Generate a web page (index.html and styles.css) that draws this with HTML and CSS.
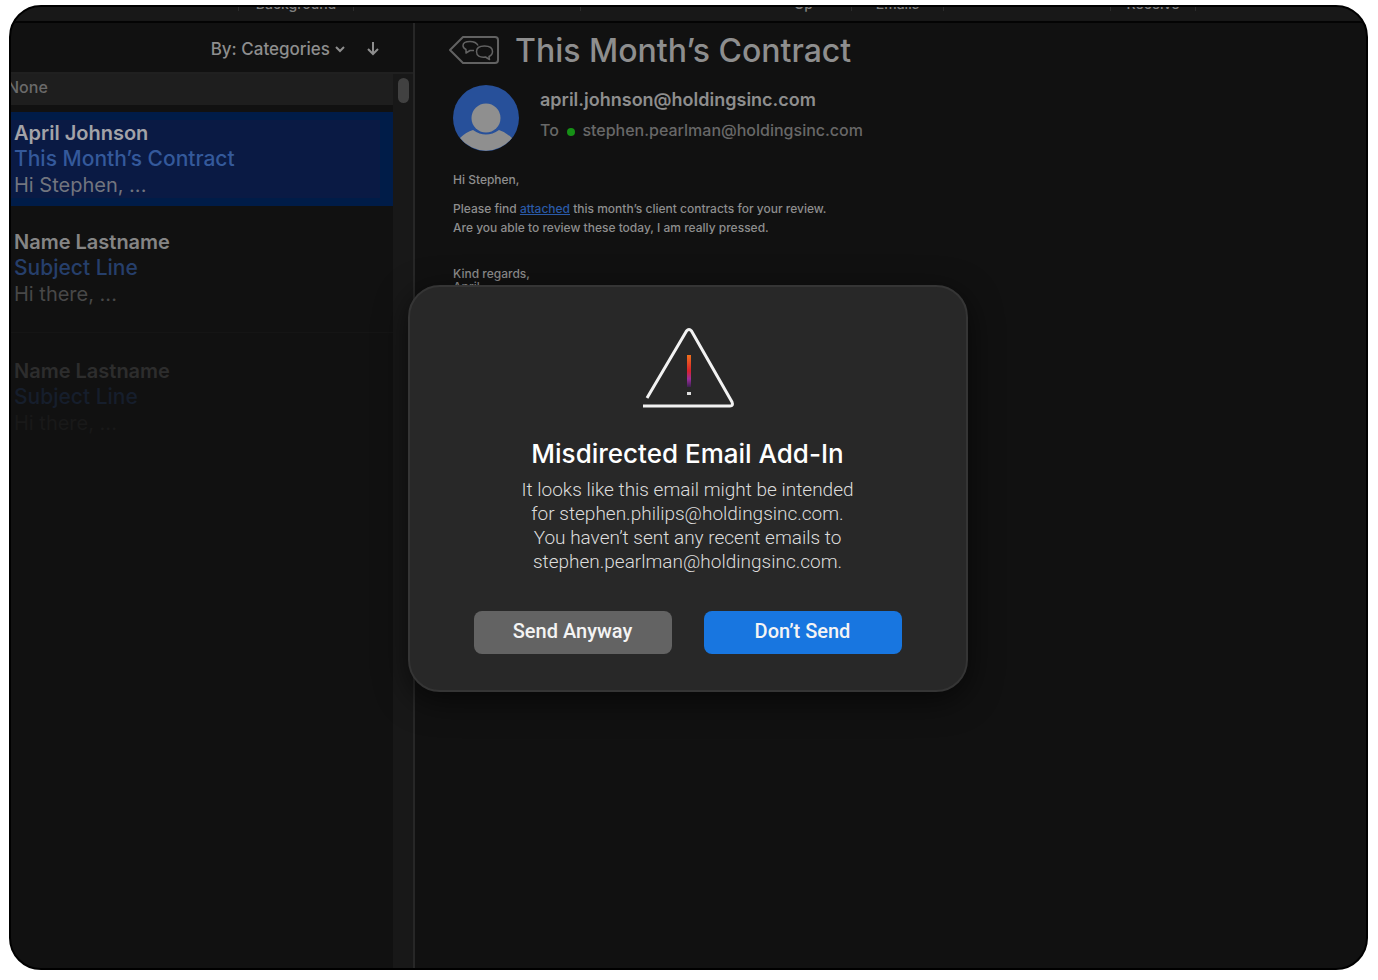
FILE: index.html
```
<!DOCTYPE html>
<html lang="en">
<head>
	<meta charset="UTF-8">
	<title>Mail</title>
	<link rel="stylesheet" href="styles.css">
</head>
<body>
<div class="window">

	<div class="ribbon">
		<span class="group"></span>
		<span class="group">Background</span>
		<span class="group"></span>
		<span class="group open"></span>
		<span class="group">Up</span>
		<span class="group">Emails</span>
		<span class="group"></span>
		<span class="group">Receive</span>
	</div>

	<div class="panes">
		<aside class="sidebar">
			<div class="sort">
				<button type="button" class="sort-by">By: Categories
					<svg width="12" height="8" viewBox="0 0 12 8"><path d="M2 2l4 4 4-4"/></svg>
				</button>
				<button type="button" class="sort-dir" aria-label="Sort direction">
					<svg width="14" height="16" viewBox="0 0 14 16"><path d="M7 1v12M2 8l5 5 5-5"/></svg>
				</button>
			</div>
			<div class="list">
				<div class="messages">
					<div class="category">None</div>
					<article class="message selected">
						<h2>April Johnson</h2>
						<p class="subject">This Month’s Contract</p>
						<p class="preview">Hi Stephen, ...</p>
					</article>
					<article class="message second">
						<h2>Name Lastname</h2>
						<p class="subject">Subject Line</p>
						<p class="preview">Hi there, ...</p>
					</article>
					<article class="message third">
						<h2>Name Lastname</h2>
						<p class="subject">Subject Line</p>
						<p class="preview">Hi there, ...</p>
					</article>
				</div>
				<div class="scroll"><div class="thumb"></div></div>
			</div>
		</aside>

		<main class="reader">
			<div class="title">
				<svg class="tag" width="52" height="30" viewBox="0 0 52 30">
					<path d="M2 15L15 2h32q3 0 3 3v20q0 3-3 3H15z"/>
					<path class="bubble" d="M26 15.500h-4l-4 2.500v-3.500q-3-1.500-3-4Q15 6.500 22 6.500q6 0 8 4"/>
					<path class="bubble" d="M41 21.500l.5 3-4-2.500q-9 1-9-5.500 0-5.500 8-5.500t8 5.500q0 3.500-3.500 5z"/>
				</svg>
				<h1>This Month’s Contract</h1>
			</div>
			<div class="people">
				<svg class="avatar" width="66" height="66" viewBox="0 0 66 66">
					<circle cx="33" cy="33" r="33" fill="#27509a"/>
					<path d="M7 53q6-6 13-8q13 9 26 0q7 2 13 8a33 33 0 0 1-52 0z" fill="#8f8f8f"/>
					<circle cx="33" cy="33" r="14.500" fill="#8f8f8f"/>
				</svg>
				<div>
					<p class="from">april.johnson@holdingsinc.com</p>
					<p class="to">To <span class="online"></span> stephen.pearlman@holdingsinc.com</p>
				</div>
			</div>
			<div class="body">
				<p>Hi Stephen,</p>
				<p>Please find <a href="#">attached</a> this month’s client contracts for your review.<br>
				Are you able to review these today, I am really pressed.</p>
				<p class="sign">Kind regards,<br>April</p>
			</div>
		</main>
	</div>

	<div class="overlay">
		<div class="dialog" role="alertdialog" aria-labelledby="dialog-title">
			<svg class="warning" width="94" height="82" viewBox="0 0 94 82">
				<defs>
					<linearGradient id="heat" x1="0" y1="0" x2="0" y2="1">
						<stop offset="0" stop-color="#f0701c"/>
						<stop offset=".5" stop-color="#d8222c"/>
						<stop offset=".75" stop-color="#9c2f9c"/>
						<stop offset="1" stop-color="#3b2050"/>
					</linearGradient>
				</defs>
				<path d="M6 71L45.500 4q2.500-3 5 0L91 75q1.500 4-2 4H2" fill="none" stroke="#f2f2f2" stroke-width="3" stroke-linejoin="round"/>
				<rect x="46" y="28" width="4" height="32" fill="url(#heat)"/>
				<rect x="46" y="65" width="4" height="3" fill="#ddd"/>
			</svg>
			<h2 id="dialog-title">Misdirected Email Add-In</h2>
			<p>It looks like this email might be intended<br>
			for stephen.philips@holdingsinc.com.<br>
			You haven’t sent any recent emails to<br>
			stephen.pearlman@holdingsinc.com.</p>
			<div class="actions">
				<button type="button">Send Anyway</button>
				<button type="button" class="primary">Don’t Send</button>
			</div>
		</div>
	</div>

</div>
</body>
</html>
```
FILE: styles.css
```
*{
	box-sizing: border-box;
}

body{
	margin: 0;
	padding: 5px 10px 10px 9px;
	height: 100vh;
	background: #fff;
	font-family: Inter, "Liberation Sans", sans-serif;
	color: #8e8e8e;
}

h1, h2, p{
	margin: 0;
	font-weight: 500;
}

button{
	border: 0;
	padding: 0;
	background: none;
	color: inherit;
	font: inherit;
	cursor: pointer;
}

.window{
	position: relative;
	display: flex;
	flex-direction: column;
	height: 100%;
	border: 2px solid #000;
	border-radius: 32px;
	background: #111;
	overflow: hidden;
}

/* ribbon */
.ribbon{
	display: grid;
	grid-template-columns: 228fr 115fr 227fr 175fr 96fr 92fr 167fr 85fr 170fr;
	grid-template-rows: 4px;
	height: 16px;
	flex: none;
	align-items: end;
	overflow: hidden;
	background: #181818;
	border-bottom: 2px solid #040404;
}

.group{
	height: 20px;
	border-right: 1px solid #2c2c2c;
	color: #808080;
	font-size: 14px;
	font-weight: 500;
	line-height: 26px;
	text-align: center;
}

.group.open{
	border: 0;
}

.panes{
	display: flex;
	flex: 1;
}

/* message list */
.sidebar{
	display: flex;
	flex-direction: column;
	width: 404px;
	flex: none;
	border-right: 2px solid #272727;
}

.sort{
	display: flex;
	justify-content: flex-end;
	align-items: center;
	gap: 20px;
	height: 51px;
	padding: 2px 33px 0 0;
	border-bottom: 2px solid #202020;
	font-size: 17px;
	font-weight: 500;
}

.sort button{
	display: flex;
	align-items: center;
	gap: 4px;
}

.sort svg{
	fill: none;
	stroke: #8e8e8e;
	stroke-width: 2;
}

.list{
	display: flex;
	flex: 1;
}

.messages{
	flex: 1;
}

.category{
	height: 31px;
	margin-bottom: 7px;
	margin-left: -4px;
	background: #1e1e1e;
	color: #6a6a6a;
	font-size: 16px;
	font-weight: 500;
	line-height: 27px;
}

.message{
	height: 109px;
	padding: 8px 3px;
	font-size: 20px;
	line-height: 26px;
}

.message h2{
	font-size: 20px;
	font-weight: 600;
}

.message.selected{
	height: 94px;
	margin-bottom: 15px;
	background: #0a1a44;
	border: solid #001c48;
	border-width: 8px 13px 8px 0;
	padding: 0 3px;
}

.selected h2{
	color: #a3a3a8;
}

.subject{
	color: #34599b;
	font-size: 21px;
}

.preview{
	color: #72757f;
	font-weight: 400;
}

.second{
	height: 112px;
	border-bottom: 1px solid #151515;
}

.second h2{
	color: #858585;
}

.second .subject{
	color: #263f6b;
}

.second .preview{
	color: #484848;
}

.third{
	margin-top: 17px;
}

.third h2{
	color: #2d2d2d;
}

.third .subject{
	color: #161e2c;
}

.third .preview{
	color: #191919;
}

.scroll{
	width: 20px;
	padding: 4px 5px;
	background: #181818;
}

.thumb{
	width: 11px;
	height: 25px;
	border-radius: 6px;
	background: #414141;
}

/* open message */
.reader{
	flex: 1;
	padding: 6px 33px;
}

.title{
	display: flex;
	align-items: center;
	gap: 15px;
	height: 42px;
}

.title h1{
	font-size: 32px;
}

.tag{
	fill: none;
	stroke: #626262;
	stroke-width: 2;
	stroke-linejoin: round;
}

.tag .bubble{
	stroke-width: 1.5;
}

.people{
	display: flex;
	gap: 21px;
	margin-top: 14px;
	padding-left: 5px;
}

.from, .to{
	font-size: 18px;
	line-height: 30px;
}

.from{
	font-weight: 600;
}

.to{
	color: #686868;
	font-size: 16px;
}

.online{
	display: inline-block;
	width: 8px;
	height: 8px;
	margin: 0 3px 0 4px;
	border-radius: 50%;
	background: #169016;
}

.body{
	padding: 19px 5px;
	font-size: 12px;
	line-height: 19px;
}

.body p{
	margin-bottom: 10px;
}

.body a{
	color: #2a5aa8;
}

.body .sign{
	padding-top: 20px;
	line-height: 13px;
}

/* warning dialog */
.overlay{
	position: absolute;
	inset: 0;
	display: grid;
	place-items: center;
	padding: 2px 2px 0 0;
}

.dialog{
	width: 560px;
	padding: 40px 64px 36px;
	border: 2px solid #353535;
	border-radius: 32px;
	background: #282828;
	box-shadow: 0 8px 32px rgba(0, 0, 0, .6);
	text-align: center;
	color: #dcdcdc;
}

.warning{
	display: block;
	margin: 0 auto 29px;
}

.dialog h2{
	margin-bottom: 8px;
	color: #fff;
	font-size: 26px;
	line-height: 32px;
}

.dialog p{
	font-family: Roboto, "Liberation Sans", sans-serif;
	font-size: 19px;
	font-weight: 300;
	line-height: 24px;
}

.actions{
	display: grid;
	grid-template-columns: 1fr 1fr;
	gap: 32px;
	margin-top: 37px;
}

.actions button{
	height: 43px;
	padding-bottom: 3px;
	border-radius: 8px;
	background: #636363;
	color: #f4f4f4;
	font-family: Roboto, "Liberation Sans", sans-serif;
	font-size: 20px;
	font-weight: 500;
}

.actions .primary{
	background: #1876e0;
}
```
